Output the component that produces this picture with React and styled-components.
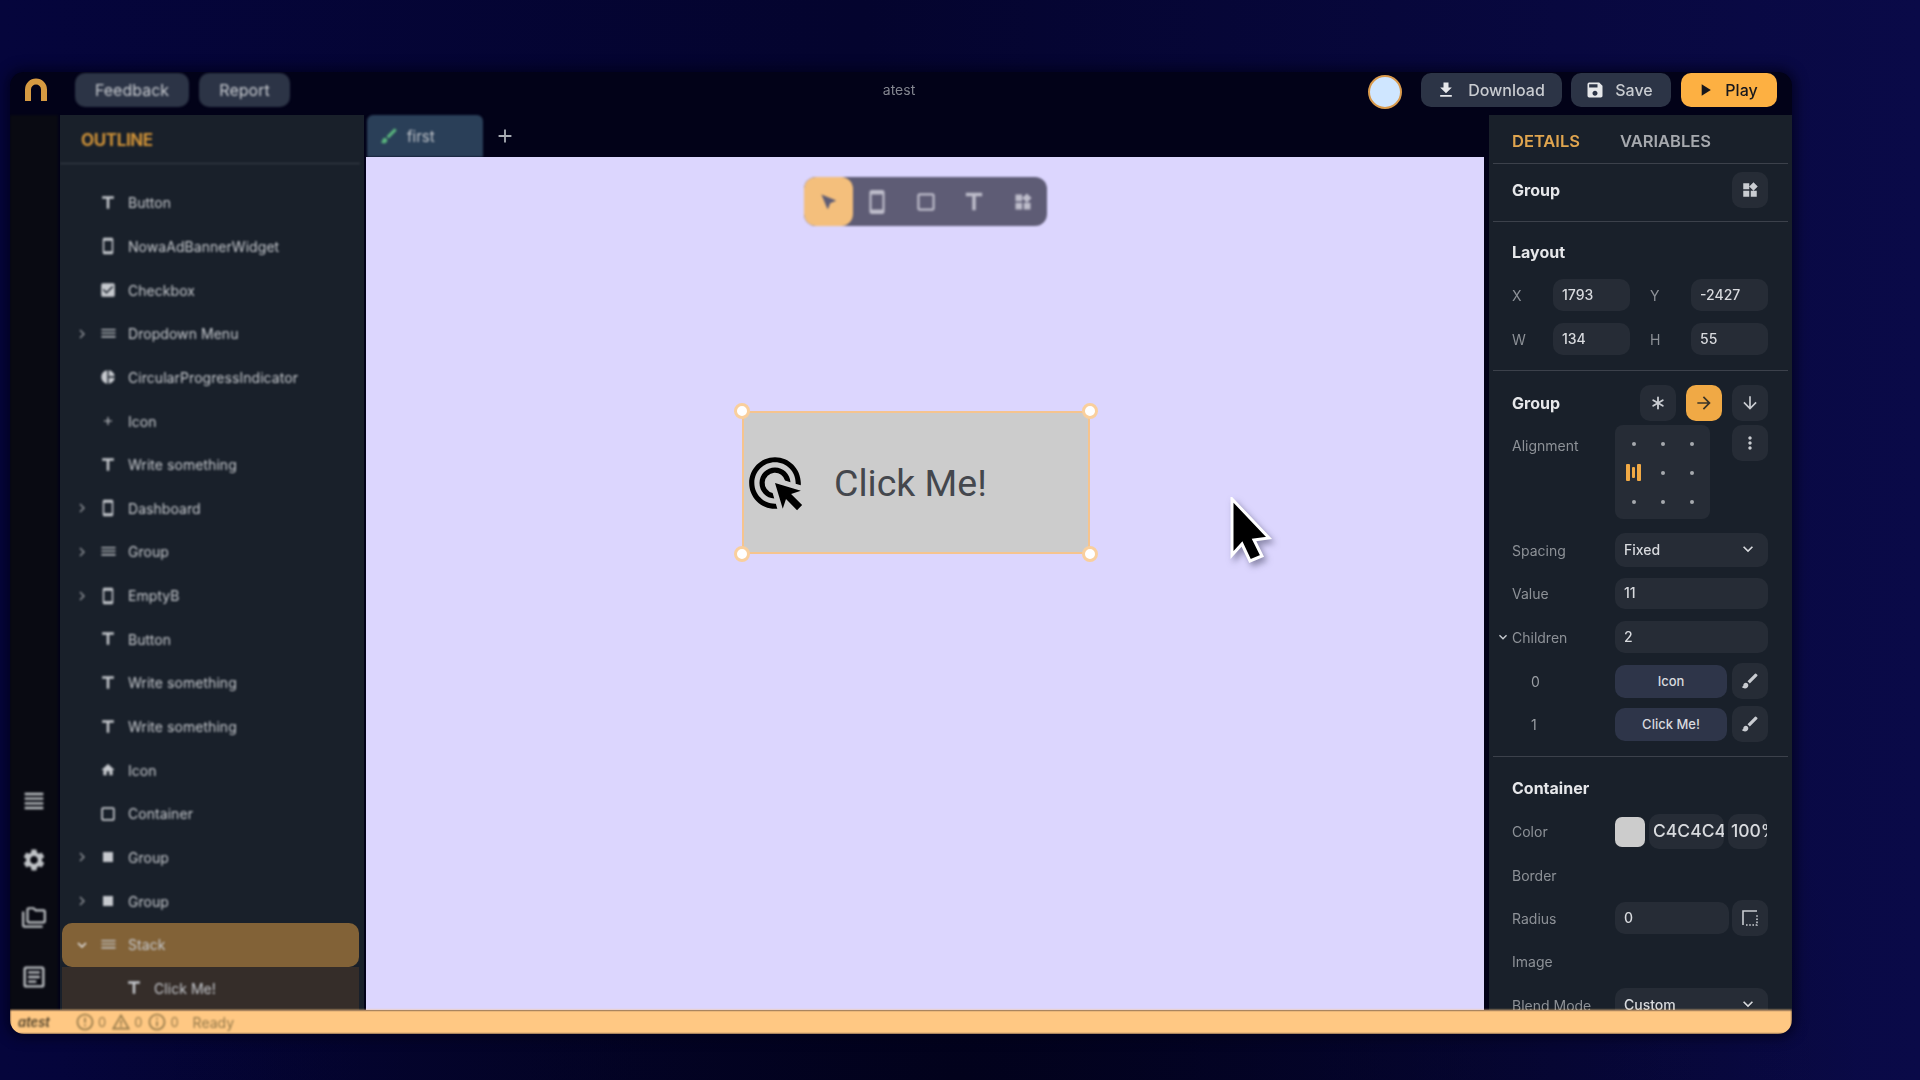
import React from "react";
import styled, { createGlobalStyle } from "styled-components";
import { Asterisk } from "lucide-react";
import {
  MdAdd,
  MdArrowDownward,
  MdArrowForward,
  MdBrush,
  MdCheckBox,
  MdChevronRight,
  MdCropSquare,
  MdDehaze,
  MdPieChart,
  MdErrorOutline,
  MdExpandMore,
  MdFileDownload,
  MdHome,
  MdInfoOutline,
  MdMoreVert,
  MdOutlineAdsClick,
  MdOutlineArticle,
  MdOutlineFolderCopy,
  MdOutlineSmartphone,
  MdPlayArrow,
  MdSave,
  MdSettings,
  MdStop,
  MdTitle,
  MdViewHeadline,
  MdWarningAmber,
  MdWidgets,
  MdNearMe,
} from "react-icons/md";

const GlobalStyle = createGlobalStyle`
  html, body {
    margin: 0;
    height: 100%;
  }
  body {
    font-family: Inter, "Liberation Sans", sans-serif;
    background: #03032a;
    overflow: hidden;
  }
`;

const Page = styled.div`
  width: 1920px;
  height: 1080px;
  box-sizing: border-box;
  padding: 72px 128px 46px 10px;
  background:
    radial-gradient(ellipse 900px 700px at 50% 100%, #02021c 0%, rgba(2, 2, 28, 0) 100%),
    linear-gradient(90deg, #05053c 0%, #04042e 45%, #0a0a48 100%);
`;

const Window = styled.div`
  height: 962px;
  display: flex;
  flex-direction: column;
  background: #020218;
  border-radius: 14px;
  overflow: hidden;
  box-shadow: 0 0 12px 4px rgba(2, 2, 24, 0.7);
  filter: blur(0.4px);
`;

const TopBar = styled.header`
  height: 43px;
  flex: none;
  display: flex;
  align-items: flex-start;
  padding-top: 1px;
  box-sizing: border-box;
`;

const Logo = styled.svg`
  width: 24px;
  height: 23px;
  margin: 5px 27px 0 14px;
  flex: none;
`;

const TopButton = styled.button`
  height: 34px;
  width: ${(p) => p.$w}px;
  margin-right: ${(p) => p.$mr ?? 10}px;
  border: 0;
  border-radius: 10px;
  background: ${(p) => (p.$primary ? "#fdb042" : "#2c3446")};
  color: ${(p) => (p.$primary ? "#17171c" : "#c8cbd0")};
  font: ${(p) => (p.$soft ? 400 : 500)} 16px Inter, "Liberation Sans", sans-serif;
  display: flex;
  align-items: center;
  justify-content: center;
  gap: ${(p) => p.$gap ?? 10}px;
  padding: 0 ${(p) => p.$pr ?? 0}px 0 0;
  filter: ${(p) => (p.$soft ? "blur(1px)" : "none")};
  svg {
    color: ${(p) => (p.$primary ? "#17171c" : "#e6e7ea")};
    flex: none;
  }
`;

const ProjectName = styled.div`
  flex: 1;
  text-align: center;
  font-size: 14px;
  line-height: 34px;
  color: #83858f;
  padding-left: 130px;
  filter: blur(0.5px);
`;

const Avatar = styled.div`
  width: 30px;
  height: 30px;
  margin: 2px 19px 0 0;
  border-radius: 50%;
  background: #cfe6ff;
  border: 2px solid #d99a4c;
  flex: none;
`;

const Body = styled.div`
  flex: 1;
  min-height: 0;
  display: flex;
`;

const Rail = styled.nav`
  width: 48px;
  flex: none;
  margin-right: 2px;
  background: #090a12;
  color: #bfc2c6;
  display: flex;
  flex-direction: column;
  align-items: center;
  justify-content: flex-end;
  gap: 32px;
  padding-bottom: 19px;
  box-sizing: border-box;
  filter: blur(1px);
`;

const Outline = styled.aside`
  width: 304px;
  flex: none;
  background: #19202a;
  display: flex;
  flex-direction: column;
  overflow: hidden;
`;

const OutlineTitle = styled.div`
  flex: none;
  margin: 0 4px 0 0;
  padding: 3px 0 0 21px;
  height: 45px;
  border-bottom: 1px solid #3c414b;
  font-size: 17px;
  font-weight: 700;
  line-height: 45px;
  letter-spacing: -0.4px;
  color: #cf9238;
  filter: blur(0.9px);
`;

const OutlineList = styled.div`
  padding-top: 17px;
  display: flex;
  flex-direction: column;
`;

const OutlineRow = styled.div`
  height: 43.65px;
  flex: none;
  box-sizing: border-box;
  margin: 0 5px 0 2px;
  display: flex;
  align-items: center;
  padding-left: ${(p) => (p.$child ? 56 : 10)}px;
  color: #c6c9ce;
  background: ${(p) => (p.$selected ? "#826237" : p.$child ? "#352d29" : "transparent")};
  border-radius: ${(p) => (p.$selected ? "10px" : "0")};
`;

const RowText = styled.div`
  display: flex;
  align-items: center;
  filter: blur(1px);
`;

const Caret = styled.span`
  width: 20px;
  height: 20px;
  display: flex;
  align-items: center;
  justify-content: center;
  color: #8a8e94;
  flex: none;
`;

const RowIcon = styled.span`
  width: 20px;
  height: 20px;
  margin: 0 10px 0 6px;
  display: flex;
  align-items: center;
  justify-content: center;
  flex: none;
`;

const RowLabel = styled.span`
  font-size: 14px;
  letter-spacing: 0.05px;
  white-space: nowrap;
`;

const Center = styled.main`
  flex: 1;
  min-width: 0;
  display: flex;
  flex-direction: column;
  padding: 0 5px 0 2px;
`;

const TabRow = styled.div`
  height: 42px;
  flex: none;
  display: flex;
  align-items: stretch;
  padding-left: 1px;
`;

const Tab = styled.div`
  width: 116px;
  box-sizing: border-box;
  padding-left: 12px;
  display: flex;
  align-items: center;
  gap: 8px;
  background: #2a3f58;
  border-radius: 6px 6px 0 0;
  color: #bfc3c9;
  font-size: 15px;
  filter: blur(0.8px);
  svg {
    color: #58b27c;
  }
`;

const AddTab = styled.div`
  width: 44px;
  display: flex;
  align-items: center;
  justify-content: center;
  color: #a9adb4;
`;

const Canvas = styled.div`
  flex: 1;
  position: relative;
  background: #dcd6fe;
  overflow: hidden;
`;

const Toolbar = styled.div`
  position: absolute;
  left: 438px;
  top: 20px;
  height: 49px;
  width: 243px;
  display: flex;
  background: #5e5c75;
  border-radius: 12px;
  overflow: hidden;
  filter: blur(0.8px);
`;

const ToolButton = styled.div`
  width: ${(p) => (p.$active ? 49 : 48.5)}px;
  display: flex;
  align-items: center;
  justify-content: center;
  background: ${(p) => (p.$active ? "#f4bf7c" : "transparent")};
  border-radius: ${(p) => (p.$active ? "12px" : "0")};
  color: ${(p) => (p.$active ? "#5e5c75" : "#bdbcca")};
`;

const Selection = styled.div`
  position: absolute;
  left: 376px;
  top: 254px;
  width: 348px;
  height: 143px;
  box-sizing: border-box;
  padding-top: 1px;
  background: #cccccc;
  border: 2px solid #f5c48f;
  display: flex;
  align-items: center;
  gap: 28px;
  color: #000;
`;

const ClickText = styled.span`
  font: 400 37.5px Roboto, "Liberation Sans", sans-serif;
  color: #44474d;
`;

const Handle = styled.span`
  position: absolute;
  width: 10px;
  height: 10px;
  border-radius: 50%;
  background: #fff;
  border: 3px solid #f9cf9d;
  left: ${(p) => (p.$right ? "auto" : "-10px")};
  right: ${(p) => (p.$right ? "-10px" : "auto")};
  top: ${(p) => (p.$bottom ? "auto" : "-10px")};
  bottom: ${(p) => (p.$bottom ? "-10px" : "auto")};
`;

const Cursor = styled.svg`
  position: absolute;
  left: 864px;
  top: 340px;
  width: 44px;
  height: 68px;
  filter: drop-shadow(3px 4px 3px rgba(60, 60, 90, 0.5));
`;

const Details = styled.aside`
  width: 303px;
  flex: none;
  background: #19202a;
  color: #d8dade;
  overflow: hidden;
`;

const DetailTabs = styled.div`
  height: 45px;
  margin: 0 4px;
  padding: 3px 0 0 19px;
  display: flex;
  align-items: center;
  gap: 40px;
  border-bottom: 1px solid #3c414b;
  font-size: 16.5px;
  font-weight: 600;
`;

const DetailTab = styled.span`
  color: ${(p) => (p.$active ? "#e0a54f" : "#a6a9ae")};
`;

const Section = styled.section`
  margin: 0 4px;
  padding: ${(p) => p.$pt ?? 0}px 20px ${(p) => p.$pb ?? 0}px 19px;
  border-bottom: ${(p) => (p.$last ? "0" : "1px solid #3c414b")};
`;

const HeadRow = styled.div`
  display: flex;
  align-items: center;
  justify-content: space-between;
`;

const Title = styled.h3`
  margin: 0;
  font-size: 16px;
  line-height: 20px;
  font-weight: 700;
  color: #e6e7ea;
`;

const IconButton = styled.div`
  width: 36px;
  height: 36px;
  flex: none;
  display: flex;
  align-items: center;
  justify-content: center;
  border-radius: 10px;
  background: ${(p) => (p.$active ? "#f0a945" : "#262c36")};
  color: ${(p) => (p.$active ? "#3a3428" : "#c9ccd1")};
`;

const IconGroup = styled.div`
  display: flex;
  gap: 10px;
`;

const XYGrid = styled.div`
  display: grid;
  grid-template-columns: 41px 77px 61px 77px;
  row-gap: 12px;
  margin-top: 17px;
  margin-bottom: 1px;
  & > :nth-child(3),
  & > :nth-child(7) {
    margin-left: 20px;
  }
`;

const Label = styled.span`
  font-size: 14px;
  font-weight: 400;
  color: #8d9197;
  display: flex;
  align-items: ${(p) => (p.$top ? "flex-start" : "center")};
  padding-top: ${(p) => (p.$top ? 12 : 0)}px;
  position: relative;
`;

const Input = styled.div`
  height: ${(p) => p.$h ?? 32}px;
  width: ${(p) => (p.$w ? `${p.$w}px` : "auto")};
  box-sizing: border-box;
  display: flex;
  align-items: center;
  justify-content: space-between;
  padding: 0 10px 2px 9px;
  border-radius: 10px;
  background: #262c36;
  font-size: 14px;
  font-weight: 500;
  color: #d8dade;
  overflow: hidden;
  white-space: nowrap;
`;

const Field = styled.div`
  display: grid;
  grid-template-columns: 103px 1fr;
  margin-top: ${(p) => p.$mt ?? 0}px;
  min-height: 20px;
`;

const ChildIndex = styled(Label)`
  padding-left: ${(p) => p.$pl}px;
  color: #9a9ea4;
`;

const Inline = styled.div`
  display: flex;
  align-items: center;
  gap: ${(p) => p.$gap ?? 5}px;
`;

const FieldChevron = styled.span`
  position: absolute;
  left: -17px;
  top: 50%;
  transform: translateY(-50%);
  display: flex;
  color: #c9ccd1;
`;

const ChildButton = styled.div`
  width: 112px;
  height: 33px;
  display: flex;
  align-items: center;
  justify-content: center;
  border-radius: 10px;
  background: #2e3549;
  font-size: 13px;
  font-weight: 500;
  color: #d8dade;
`;

const AlignRow = styled.div`
  display: grid;
  grid-template-columns: 103px 95px 1fr;
  margin-top: 4px;
  & > :last-child {
    justify-self: end;
  }
`;

const AlignGrid = styled.div`
  width: 95px;
  height: 94px;
  box-sizing: border-box;
  padding: 4px;
  border-radius: 8px;
  background: #262c36;
  display: grid;
  grid-template-columns: repeat(3, 29px);
  grid-template-rows: repeat(3, 29px);
  place-items: center;
`;

const Dot = styled.span`
  width: 4px;
  height: 4px;
  border-radius: 50%;
  background: #a6a9ae;
`;

const AlignBars = styled.span`
  display: flex;
  align-items: center;
  gap: 2px;
`;

const AlignBar = styled.span`
  width: ${(p) => (p.$thin ? 3 : 4)}px;
  height: ${(p) => (p.$thin ? 11 : 17)}px;
  background: #f0a945;
  border-radius: 1px;
`;

const Swatch = styled.div`
  width: 30px;
  height: 30px;
  flex: none;
  border-radius: 7px;
  background: #cccccc;
`;

const ColorInput = styled(Input)`
  flex: none;
  padding: 0 0 2px ${(p) => p.$pl}px;
  font-size: 17.5px;
  justify-content: flex-start;
`;

const StatusBar = styled.footer`
  height: 24px;
  flex: none;
  background: #ffc883;
  display: flex;
  align-items: center;
  padding-left: 8px;
  color: #6b5a3c;
  font-size: 13px;
  filter: blur(0.9px);
`;

const StatusName = styled.span`
  font-weight: 600;
  font-style: italic;
  color: #4c3f29;
  width: 57px;
  flex: none;
`;

const StatusItem = styled.span`
  display: flex;
  align-items: center;
  gap: 3px;
  margin-right: 5px;
  color: #94794a;
`;

const StatusReady = styled.span`
  margin-left: 9px;
  font-size: 14px;
  color: #94794a;
`;

const outlineRows = [
  { icon: <MdTitle size={20} />, label: "Button" },
  { icon: <MdOutlineSmartphone size={18} />, label: "NowaAdBannerWidget" },
  { icon: <MdCheckBox size={18} />, label: "Checkbox" },
  { icon: <MdDehaze size={17} />, label: "Dropdown Menu", caret: true },
  { icon: <MdPieChart size={16} />, label: "CircularProgressIndicator" },
  { icon: <MdAdd size={14} />, label: "Icon" },
  { icon: <MdTitle size={20} />, label: "Write something" },
  { icon: <MdOutlineSmartphone size={18} />, label: "Dashboard", caret: true },
  { icon: <MdDehaze size={17} />, label: "Group", caret: true },
  { icon: <MdOutlineSmartphone size={18} />, label: "EmptyB", caret: true },
  { icon: <MdTitle size={20} />, label: "Button" },
  { icon: <MdTitle size={20} />, label: "Write something" },
  { icon: <MdTitle size={20} />, label: "Write something" },
  { icon: <MdHome size={16} />, label: "Icon" },
  { icon: <MdCropSquare size={24} />, label: "Container" },
  { icon: <MdStop size={24} />, label: "Group", caret: true },
  { icon: <MdStop size={24} />, label: "Group", caret: true },
  { icon: <MdDehaze size={17} />, label: "Stack", open: true, selected: true },
  { icon: <MdTitle size={22} />, label: "Click Me!", child: true },
];

function OutlineItem({ row }) {
  return (
    <OutlineRow $selected={row.selected} $child={row.child}>
      <RowText>
        {!row.child && (
          <Caret>
            {row.caret && <MdChevronRight size={18} />}
            {row.open && <MdExpandMore size={18} color="#e6e7ea" />}
          </Caret>
        )}
        <RowIcon>{row.icon}</RowIcon>
        <RowLabel>{row.label}</RowLabel>
      </RowText>
    </OutlineRow>
  );
}

// radius icon: solid top and left edges, dotted bottom and right
function RadiusIcon() {
  return (
    <svg width="18" height="18" viewBox="0 0 18 18" fill="none" stroke="currentColor" strokeWidth="1.6">
      <path d="M2 16V2H16" />
      <path d="M5 16H16V5" strokeDasharray="1.6 1.6" />
    </svg>
  );
}

export default function App() {
  return (
    <Page>
      <GlobalStyle />
      <Window>
        <TopBar>
          <Logo viewBox="0 0 24 23">
            <path d="M4 23V11.5a8 8 0 0 1 16 0V23" fill="none" stroke="#d69a42" strokeWidth="6" />
          </Logo>
          <TopButton $w={114} $soft>Feedback</TopButton>
          <TopButton $w={91} $soft>Report</TopButton>
          <ProjectName>atest</ProjectName>
          <Avatar />
          <TopButton $w={141} $mr={9} $gap={12} $pr={2}>
            <MdFileDownload size={20} />
            Download
          </TopButton>
          <TopButton $w={100} $mr={10} $pr={4}>
            <MdSave size={20} />
            Save
          </TopButton>
          <TopButton $w={96} $mr={15} $pr={5} $primary>
            <MdPlayArrow size={20} />
            Play
          </TopButton>
        </TopBar>
        <Body>
          <Rail>
            <MdViewHeadline size={28} />
            <MdSettings size={26} />
            <MdOutlineFolderCopy size={26} />
            <MdOutlineArticle size={28} />
          </Rail>
          <Outline>
            <OutlineTitle>OUTLINE</OutlineTitle>
            <OutlineList>
              {outlineRows.map((row, i) => (
                <OutlineItem key={i} row={row} />
              ))}
            </OutlineList>
          </Outline>
          <Center>
            <TabRow>
              <Tab>
                <MdBrush size={20} />
                first
              </Tab>
              <AddTab>
                <MdAdd size={22} />
              </AddTab>
            </TabRow>
            <Canvas>
              <Toolbar>
                <ToolButton $active>
                  <MdNearMe size={19} style={{ transform: "rotate(-90deg)" }} />
                </ToolButton>
                <ToolButton><MdOutlineSmartphone size={26} /></ToolButton>
                <ToolButton><MdCropSquare size={26} /></ToolButton>
                <ToolButton><MdTitle size={28} /></ToolButton>
                <ToolButton><MdWidgets size={20} /></ToolButton>
              </Toolbar>
              <Selection>
                <MdOutlineAdsClick size={62} />
                <ClickText>Click Me!</ClickText>
                <Handle />
                <Handle $right />
                <Handle $bottom />
                <Handle $right $bottom />
              </Selection>
              <Cursor viewBox="0 0 44 68">
                <path
                  d="M2 2L39 41L24 43L32 59L20 64L12 47L2 58Z"
                  fill="#000"
                  stroke="#fff"
                  strokeWidth="3"
                />
              </Cursor>
            </Canvas>
          </Center>
          <Details>
            <DetailTabs>
              <DetailTab $active>DETAILS</DetailTab>
              <DetailTab>VARIABLES</DetailTab>
            </DetailTabs>
            <Section $pt={8} $pb={13}>
              <HeadRow>
                <Title>Group</Title>
                <IconButton><MdWidgets size={18} /></IconButton>
              </HeadRow>
            </Section>
            <Section $pt={20} $pb={14}>
              <Title>Layout</Title>
              <XYGrid>
                <Label>X</Label>
                <Input>1793</Input>
                <Label>Y</Label>
                <Input>-2427</Input>
                <Label>W</Label>
                <Input>134</Input>
                <Label>H</Label>
                <Input>55</Input>
              </XYGrid>
            </Section>
            <Section $pt={14} $pb={14}>
              <HeadRow>
                <Title>Group</Title>
                <IconGroup>
                  <IconButton><Asterisk size={22} /></IconButton>
                  <IconButton $active><MdArrowForward size={20} /></IconButton>
                  <IconButton><MdArrowDownward size={20} /></IconButton>
                </IconGroup>
              </HeadRow>
              <AlignRow>
                <Label $top>Alignment</Label>
                <AlignGrid>
                  <Dot /><Dot /><Dot />
                  <AlignBars>
                    <AlignBar />
                    <AlignBar $thin />
                    <AlignBar />
                  </AlignBars>
                  <Dot /><Dot />
                  <Dot /><Dot /><Dot />
                </AlignGrid>
                <IconButton><MdMoreVert size={20} /></IconButton>
              </AlignRow>
              <Field $mt={14}>
                <Label>Spacing</Label>
                <Input $h={34}>Fixed<MdExpandMore size={20} /></Input>
              </Field>
              <Field $mt={11}>
                <Label>Value</Label>
                <Input $h={31}>11</Input>
              </Field>
              <Field $mt={12}>
                <Label>
                  <FieldChevron><MdExpandMore size={16} /></FieldChevron>
                  Children
                </Label>
                <Input>2</Input>
              </Field>
              <Field $mt={10}>
                <ChildIndex $pl={19}>0</ChildIndex>
                <Inline>
                  <ChildButton>Icon</ChildButton>
                  <IconButton><MdBrush size={20} /></IconButton>
                </Inline>
              </Field>
              <Field $mt={7}>
                <ChildIndex $pl={19}>1</ChildIndex>
                <Inline>
                  <ChildButton>Click Me!</ChildButton>
                  <IconButton><MdBrush size={20} /></IconButton>
                </Inline>
              </Field>
            </Section>
            <Section $pt={21} $last>
              <Title>Container</Title>
              <Field $mt={16}>
                <Label>Color</Label>
                <Inline $gap={4}>
                  <Swatch />
                  <ColorInput $w={75} $pl={4} $h={35}>C4C4C4</ColorInput>
                  <ColorInput $w={39} $pl={3} $h={35}>100%</ColorInput>
                </Inline>
              </Field>
              <Field $mt={16}>
                <Label>Border</Label>
              </Field>
              <Field $mt={15}>
                <Label>Radius</Label>
                <Inline $gap={3}>
                  <Input $w={114}>0</Input>
                  <IconButton><RadiusIcon /></IconButton>
                </Inline>
              </Field>
              <Field $mt={15}>
                <Label>Image</Label>
              </Field>
              <Field $mt={17}>
                <Label>Blend Mode</Label>
                <Input $h={34}>Custom<MdExpandMore size={20} /></Input>
              </Field>
            </Section>
          </Details>
        </Body>
        <StatusBar>
          <StatusName>atest</StatusName>
          <StatusItem><MdErrorOutline size={20} />0</StatusItem>
          <StatusItem><MdWarningAmber size={20} />0</StatusItem>
          <StatusItem><MdInfoOutline size={20} />0</StatusItem>
          <StatusReady>Ready</StatusReady>
        </StatusBar>
      </Window>
    </Page>
  );
}
